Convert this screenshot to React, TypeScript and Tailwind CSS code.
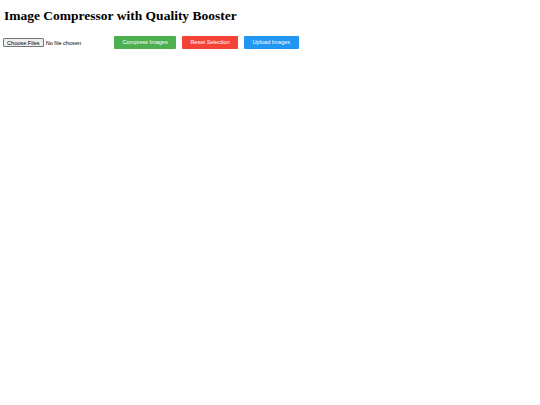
export default function App() {
  return (
    <div className="min-h-screen bg-white px-[4px] text-black">
      <h1 className="mt-[8px] mb-0 text-[13.5px] leading-[16px] font-bold font-['Liberation_Serif',serif]">
        Image Compressor with Quality Booster
      </h1>

      <div className="mt-[12px] flex items-center font-['Liberation_Sans',Arial,sans-serif]">
        <input
          type="file"
          multiple
          className="w-[104px] -ml-[1px] text-[5.6px] leading-[7px] file:mr-[2px] file:rounded-[1px] file:border file:border-[#767676] file:bg-[#efefef] file:px-[3px] file:py-[0.5px] file:text-[5.6px] file:leading-[6px]"
        />
        <button className="ml-[7px] rounded-[1px] bg-[#4caf50] px-[8.4px] py-[3.4px] text-[5.6px] leading-[6.5px] text-white">
          Compress Images
        </button>
        <button className="ml-[6px] rounded-[1px] bg-[#f44336] px-[8.4px] py-[3.4px] text-[5.6px] leading-[6.5px] text-white">
          Reset Selection
        </button>
        <button className="ml-[6px] rounded-[1px] bg-[#2196f3] px-[8.4px] py-[3.4px] text-[5.6px] leading-[6.5px] text-white">
          Upload Images
        </button>
      </div>
    </div>
  );
}
